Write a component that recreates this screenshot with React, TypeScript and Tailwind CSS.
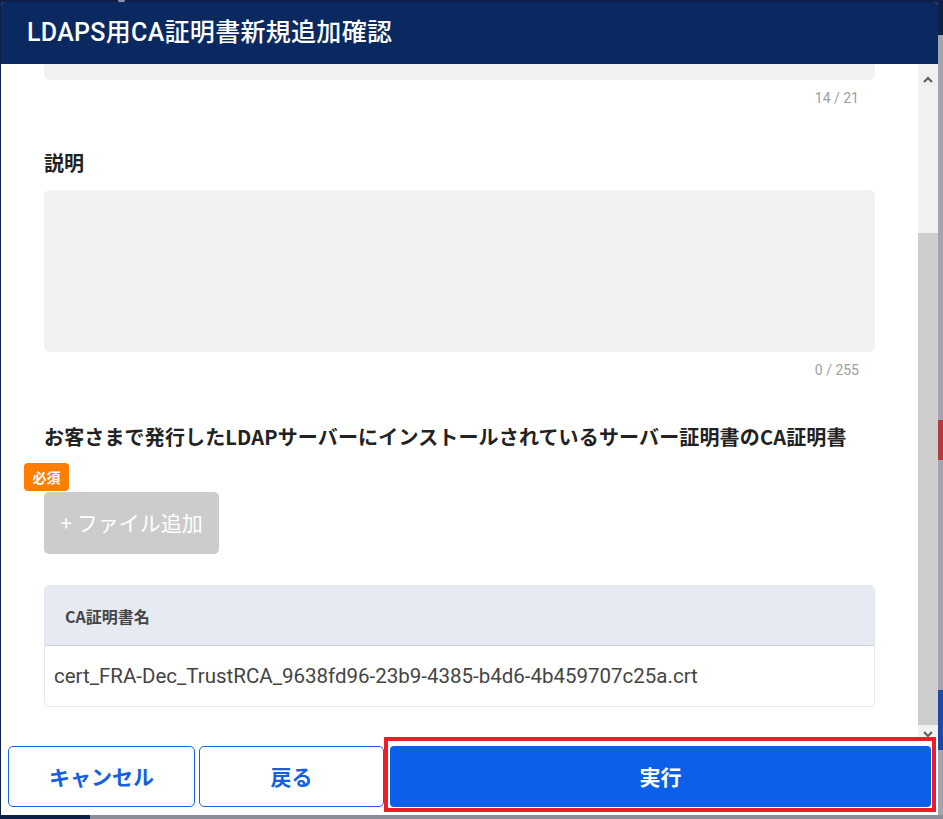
import { ReactNode } from "react";

const jp = "font-['Noto_Sans_CJK_JP','Noto_Sans',sans-serif]";
const ro = "font-['Roboto','Noto_Sans_CJK_JP',sans-serif]";

const Counter = ({ children }: { children: ReactNode }) => (
  <div className={`pr-[16px] text-right text-[14px] leading-[16px] text-[#9e9e9e] ${ro}`}>
    {children}
  </div>
);

const Arrow = ({ down }: { down?: boolean }) => (
  <svg width="10" height="7" viewBox="0 0 10 7" className={down ? "rotate-180" : ""}>
    <polyline points="1,6 5,2 9,6" fill="none" stroke="#5f5f5f" strokeWidth="2.2" />
  </svg>
);

const App = () => {
  return (
    <div className="relative h-[819px] w-[943px] overflow-hidden bg-[#0e1f48]">
      {/* background page peeking around the modal */}
      <div className="absolute right-0 top-[35px] h-[784px] w-[5px] bg-[#a2a5af]">
        <div className="mt-[385px] h-[40px] w-full bg-[#b53a45]" />
        <div className="mt-[230px] h-[60px] w-full bg-[#1b49a8]" />
      </div>
      <div className="absolute bottom-0 left-[90px] h-[4px] w-[853px] bg-[#8b8e9a]" />
      <div className="absolute left-[118px] top-[-4px] h-[7px] w-[7px] rounded-full bg-[#8f95a6]" />

      <div className="relative ml-[1px] mt-[2px] flex h-[813px] w-[937px] flex-col overflow-hidden rounded-t-[4px] bg-white">
        <div className="flex h-[62px] shrink-0 items-center bg-[#0a2961] px-[26px]">
          <h1 className={`text-[25px] font-medium tracking-[0.3px] text-white ${ro}`}>
            LDAPS用CA証明書新規追加確認
          </h1>
        </div>

        <div className="flex h-[677px] shrink-0">
          <div className="flex-1 overflow-hidden pl-[43px] pr-[43px]">
            <div className="h-[16px] rounded-b-[6px] bg-[#f2f2f2]" />
            <div className="mt-[10px]">
              <Counter>14 / 21</Counter>
            </div>

            <div className={`mt-[45px] text-[20px] font-bold leading-[24px] text-[#222] ${jp}`}>説明</div>
            <div className="mt-[15px] h-[162px] rounded-[6px] bg-[#f2f2f2]" />
            <div className="mt-[10px]">
              <Counter>0 / 255</Counter>
            </div>

            <div
              className={`mt-[47px] whitespace-nowrap text-[20px] font-bold leading-[24px] tracking-[0.15px] text-[#222] ${jp}`}
            >
              お客さまで発行したLDAPサーバーにインストールされているサーバー証明書のCA証明書
            </div>
            <div
              className={`-ml-[20px] mt-[14px] flex h-[28px] w-[45px] items-center justify-center rounded-[4px] bg-[#ff7d00] text-[14px] font-bold text-white ${jp}`}
            >
              必須
            </div>
            <button
              className={`mt-[1px] flex h-[62px] w-[175px] items-center justify-center rounded-[5px] bg-[#cccccc] text-[21px] text-white ${jp}`}
            >
              + ファイル追加
            </button>

            <div className="mt-[31px] overflow-hidden rounded-[5px] border border-[#e4e7ee]">
              <div
                className={`flex h-[60px] items-center border-b border-[#cfd5e0] bg-[#e6eaf3] pl-[20px] text-[16px] font-bold text-[#444] ${jp}`}
              >
                CA証明書名
              </div>
              <div className={`flex h-[60px] items-center pl-[9px] text-[20.5px] text-[#444] ${ro}`}>
                cert_FRA-Dec_TrustRCA_9638fd96-23b9-4385-b4d6-4b459707c25a.crt
              </div>
            </div>
          </div>

          <div className="flex w-[20px] shrink-0 flex-col bg-[#f1f1f1]">
            <div className="flex h-[22px] items-end justify-center pb-[3px]">
              <Arrow />
            </div>
            <div className="mt-[147px] h-[492px] bg-[#cdcdcd]" />
            <div className="flex h-[16px] items-start justify-center pt-[6px]">
              <Arrow down />
            </div>
          </div>
        </div>

        <div className="flex h-[74px] shrink-0 items-start pl-[7px] pr-[2px] pt-[5px]">
          <button
            className={`flex h-[61px] w-[187px] items-center justify-center rounded-[5px] border border-[#1a62e3] text-[21px] font-bold text-[#1560e0] ${jp}`}
          >
            キャンセル
          </button>
          <button
            className={`ml-[4px] flex h-[61px] w-[185px] items-center justify-center rounded-[5px] border border-[#1a62e3] text-[21px] font-bold text-[#1560e0] ${jp}`}
          >
            戻る
          </button>
          <div className="relative z-10 -mt-[9px] flex-1 border-4 border-[#ee1c25] pb-[1px] pl-[2px] pr-[1px] pt-[5px]">
            <button
              className={`flex h-[61px] w-full items-center justify-center rounded-[4px] bg-[#0b5fe8] text-[21px] font-bold text-white ${jp}`}
            >
              実行
            </button>
          </div>
        </div>
      </div>
    </div>
  );
};

export default App;
